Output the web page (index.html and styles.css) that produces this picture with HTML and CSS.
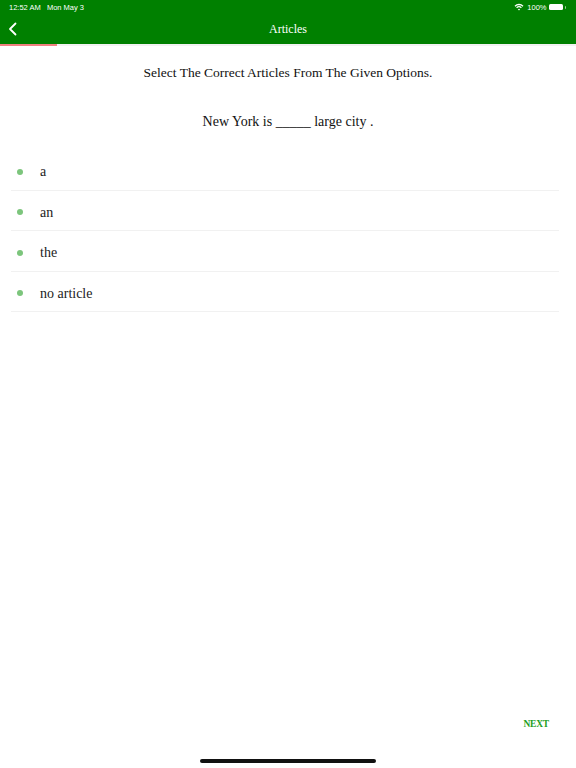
FILE: index.html
```html
<!DOCTYPE html>
<html>
<head>
<meta charset="utf-8">
<link rel="stylesheet" href="styles.css">
</head>
<body>
<div class="screen">
  <header class="header">
    <div class="status">
      <span class="time">12:52 AM&nbsp;&nbsp; Mon May 3</span>
      <span class="status-right">
        <svg class="wifi" width="10" height="8" viewBox="0 0 10 8"><path d="M1 3.2 A5.6 5.6 0 0 1 9 3.2" stroke="#fff" stroke-width="1.3" fill="none"/><path d="M2.6 4.8 A3.4 3.4 0 0 1 7.4 4.8" stroke="#fff" stroke-width="1.3" fill="none"/><path d="M5 7.6 L3.9 6.3 A1.6 1.6 0 0 1 6.1 6.3 Z" fill="#fff"/></svg>
        <span class="pct">100%</span>
        <span class="battery"><span class="battery-fill"></span></span><span class="battery-tip"></span>
      </span>
    </div>
    <div class="nav">
      <svg class="back" width="10" height="14" viewBox="0 0 10 14"><path d="M7.5 1.5 L2 7 L7.5 12.5" stroke="#fff" stroke-width="1.8" fill="none" stroke-linecap="round" stroke-linejoin="round"/></svg>
      <span class="nav-title">Articles</span>
    </div>
  </header>
  <div class="progress"><div class="progress-bar"></div></div>
  <main class="content">
    <p class="instruction">Select The Correct Articles From The Given Options.</p>
    <p class="question">New York is _____ large city .</p>
    <ul class="options">
      <li class="option"><span class="dot"></span><span class="label">a</span></li>
      <li class="option"><span class="dot"></span><span class="label">an</span></li>
      <li class="option"><span class="dot"></span><span class="label">the</span></li>
      <li class="option"><span class="dot"></span><span class="label">no article</span></li>
    </ul>
  </main>
  <footer class="footer">
    <span class="next">NEXT</span>
  </footer>
  <div class="home-bar"><span class="home-indicator"></span></div>
</div>
</body>
</html>
```
FILE: styles.css
```css
* { box-sizing: border-box; }
html, body { margin: 0; padding: 0; background: #fff; }
body { font-family: "Liberation Serif", "Times New Roman", serif; color: #222; }
.screen { width: 576px; height: 768px; display: flex; flex-direction: column; overflow: hidden; }
.header { background: #008000; height: 44px; display: flex; flex-direction: column; color: #fff; }
.status { height: 14px; display: flex; justify-content: space-between; align-items: center; padding: 0 10px 0 9px; font-family: "Liberation Sans", Arial, sans-serif; font-size: 7.5px; }
.status-right { display: flex; align-items: center; gap: 2px; }
.wifi { margin-right: 1px; }
.battery { width: 14px; height: 6px; border-radius: 1.5px; background: #fff; display: inline-block; }
.battery-tip { width: 1.5px; height: 3px; background: rgba(255,255,255,0.6); display: inline-block; border-radius: 0 1px 1px 0; }
.nav { flex: 1; display: flex; align-items: center; justify-content: center; position: relative; }
.back { position: absolute; left: 8px; top: 8px; }
.nav-title { font-family: "Liberation Serif", serif; font-size: 12px; margin-top: 1px; }
.progress { height: 2px; background: #f2f2f2; }
.progress-bar { width: 57px; height: 2px; background: #f08080; }
.content { flex: 1; padding: 0 17px 0 11px; }
.instruction { text-align: center; font-family: "Liberation Serif", serif; font-size: 13.5px; margin: 19px 0 0 0; line-height: 16px; color: #111; padding-left: 6px; }
.question { text-align: center; font-family: "Liberation Serif", serif; font-size: 14px; margin: 32px 0 0 0; line-height: 18px; color: #111; padding-left: 6px; }
.options { list-style: none; margin: 19px 0 0 0; padding: 0; }
.option { display: flex; align-items: center; height: 40.5px; border-bottom: 1px solid #f1f1f1; }
.dot { width: 6px; height: 6px; border-radius: 50%; background: #7cc57c; margin-left: 6px; margin-right: 17px; margin-top: 4px; }
.label { font-family: "Liberation Serif", serif; font-size: 14px; color: #222; margin-top: 5px; }
.footer { display: flex; justify-content: flex-end; padding: 0 27px 30px 0; }
.next { font-family: "Liberation Serif", serif; color: #1e9e1e; font-size: 9.5px; font-weight: bold; letter-spacing: -0.2px; }
.home-bar { height: 9px; display: flex; justify-content: center; align-items: flex-start; }
.home-indicator { width: 176px; height: 4px; border-radius: 2px; background: #111; }
```
